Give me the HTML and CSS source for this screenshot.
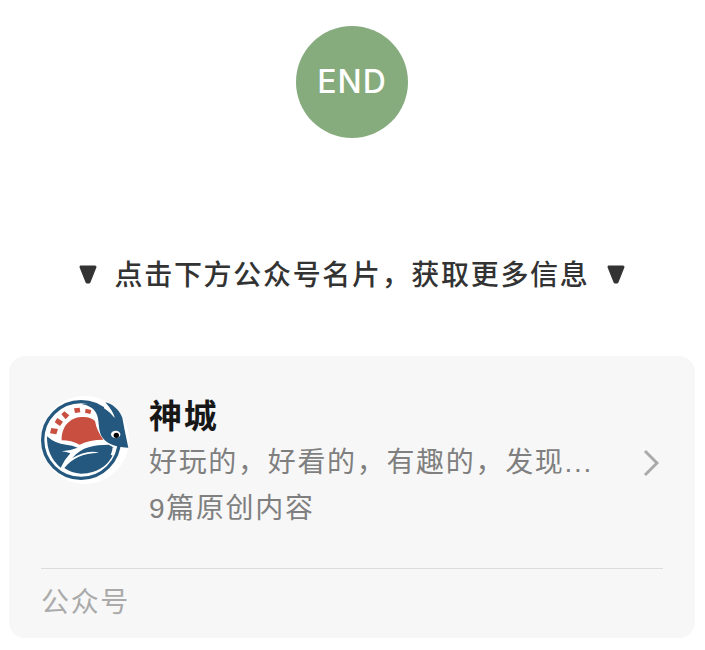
FILE: index.html
```html
<!DOCTYPE html>
<html lang="zh-CN">
<head>
<meta charset="utf-8">
<meta name="viewport" content="width=device-width, initial-scale=1">
<title>神城</title>
<link rel="stylesheet" href="styles.css">
</head>
<body>
<main class="article-end">
  <div class="end-badge">END</div>
  <p class="prompt">
    <svg class="marker" viewBox="0 0 18 22" aria-hidden="true"><path d="M2 2H16L10 17H8Z"/></svg>
    <span>点击下方公众号名片，获取更多信息</span>
    <svg class="marker" viewBox="0 0 18 22" aria-hidden="true"><path d="M2 2H16L10 17H8Z"/></svg>
  </p>
  <a class="card" href="#">
    <div class="profile">
      <svg class="avatar" viewBox="33 30 270 270" aria-hidden="true">
        <circle cx="165" cy="165" r="132" fill="#fff"/>
        <circle cx="153" cy="165" r="115" fill="none" stroke="#24587e" stroke-width="10"/>
        <path fill="#24587e" d="M51 154Q75 176 108 179Q128 181 143 188Q121 197 95 199Q110 201 121 205Q105 222 92 248Q50 214 51 154Z"/>
        <path fill="#24587e" d="M103 249C125 220 158 205 207 203C180 196 154 204 127 219C155 184 194 180 236 179L254 189C248 234 206 266 153 266Q124 264 103 249Z"/>
        <path fill="#c94f41" d="M95 166C94 123 121 98 153 96C174 94 188 101 195 108C199 130 207 146 220 164Q179 164 149 179Q124 166 95 166Z"/>
        <g fill="#c94f41">
          <path d="M64 129L84 132L79 148L60 145Z"/>
          <path d="M82 99L99 110L90 123L74 112Z"/>
          <path d="M103 79L118 91L107 103L94 88Z"/>
          <path d="M132 70L149 68L151 82L135 84Z"/>
          <path d="M167 71L184 75L181 87L165 83Z"/>
        </g>
        <path fill="#24587e" d="M154 57C190 53 229 68 254 98C249 82 239 67 226 52C246 56 268 74 277 98L284 136L295 188C267 188 236 181 219 160C201 140 211 103 197 82C190 69 174 60 154 57Z"/>
        <path d="M223 53C237 63 249 80 254 98C243 86 234 77 222 70" fill="#fff"/>
        <ellipse cx="257" cy="148" rx="14" ry="11" fill="#fff"/>
        <circle cx="259" cy="151" r="8" fill="#000"/>
        <path d="M252 187Q251 199 246 211" fill="none" stroke="#fff" stroke-width="8"/>
      </svg>
      <div class="details">
        <h2 class="name">神城</h2>
        <p class="description">好玩的，好看的，有趣的，发现...</p>
        <p class="description">9篇原创内容</p>
      </div>
      <svg class="chevron" viewBox="0 0 16 28" aria-hidden="true"><path d="M2 2L14 14L2 26"/></svg>
    </div>
    <div class="card-type">公众号</div>
  </a>
</main>
</body>
</html>
```
FILE: styles.css
```css
* {
  box-sizing: border-box;
}

body {
  margin: 0;
  background: #fff;
  color: #333;
  font-family: "Liberation Sans", "Noto Sans CJK SC", sans-serif;
  font-size: 28px;
  letter-spacing: 0.06em;
}

h2,
p {
  margin: 0;
}

.article-end {
  display: flex;
  flex-direction: column;
  align-items: center;
  padding: 26px 10px 12px 9px;
}

.end-badge {
  display: flex;
  align-items: center;
  justify-content: center;
  width: 112px;
  height: 112px;
  padding-bottom: 2px;
  border-radius: 50%;
  background: #86ab7d;
  color: #fff;
  font-family: Inter, sans-serif;
  font-size: 32px;
  font-weight: 500;
  letter-spacing: 1px;
}

.prompt {
  display: flex;
  align-items: center;
  gap: 18px;
  margin-top: 114px;
  line-height: 48px;
  font-weight: 500;
  white-space: nowrap;
}

.marker {
  width: 18px;
  height: 22px;
  fill: #333;
  stroke: #333;
  stroke-width: 3px;
  stroke-linejoin: round;
}

.card {
  display: block;
  align-self: stretch;
  margin-top: 56px;
  padding: 38px 32px 12px;
  border-radius: 16px;
  background: #f7f7f7;
  text-decoration: none;
}

.profile {
  display: flex;
  align-items: center;
  padding-bottom: 36px;
  border-bottom: 1px solid #dcdcdc;
}

.avatar {
  flex: none;
  align-self: flex-start;
  width: 90px;
  height: 90px;
  margin-top: 1px;
}

.details {
  flex: 1;
  min-width: 0;
  margin-left: 18px;
}

.name {
  color: #171717;
  font-size: 33px;
  font-weight: 700;
  line-height: 46px;
}

.description {
  overflow: hidden;
  color: #7f7f7f;
  line-height: 46px;
  text-overflow: ellipsis;
  white-space: nowrap;
}

.chevron {
  flex: none;
  width: 16px;
  height: 28px;
  margin-right: 4px;
  fill: none;
  stroke: #aaa;
  stroke-width: 3px;
}

.card-type {
  padding-top: 11px;
  color: #aaa;
  line-height: 46px;
}
```
